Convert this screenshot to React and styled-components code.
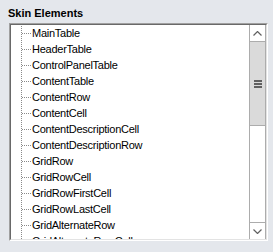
import React from 'react';
import styled, { createGlobalStyle } from 'styled-components';

const GlobalStyle = createGlobalStyle`
  html, body {
    margin: 0;
    padding: 0;
    background: #e4e7ec;
  }
  body {
    width: 273px;
    height: 252px;
    overflow: hidden;
    font-family: "Liberation Sans", Arial, sans-serif;
  }
`;

const Panel = styled.div`
  display: flex;
  flex-direction: column;
  padding: 7px 0 0 8px;
`;

const Title = styled.div`
  font-size: 11px;
  font-weight: bold;
  line-height: 13px;
  color: #000;
`;

const Box = styled.div`
  margin: 3px 0 0 1px;
  width: 259px;
  height: 218px;
  box-sizing: border-box;
  border: 1px solid;
  border-color: #a0a0a0 #ffffff #ffffff #a0a0a0;
  display: flex;
`;

const Inner = styled.div`
  flex: 1;
  display: flex;
  min-height: 0;
  border: 1px solid;
  border-color: #696969 #e3e3e3 #e3e3e3 #696969;
  background: #fff;
`;

const Tree = styled.div`
  flex: 1;
  overflow: hidden;
  background-image: linear-gradient(to bottom, #8a8a8a 50%, transparent 50%);
  background-size: 1px 2px;
  background-position: 10px 1px;
  background-repeat: repeat-y;
`;

const Row = styled.div`
  display: flex;
  align-items: center;
  height: 16px;
  flex: none;
  white-space: nowrap;
`;

const Connector = styled.span`
  width: 9px;
  height: 1px;
  margin-left: 11px;
  background-image: linear-gradient(to right, #8a8a8a 50%, transparent 50%);
  background-size: 2px 1px;
`;

const Label = styled.span`
  margin-left: 1px;
  font-size: 11px;
  letter-spacing: -0.25px;
  line-height: 16px;
  color: #000;
`;

const ScrollBar = styled.div`
  width: 17px;
  display: flex;
  flex-direction: column;
  box-sizing: border-box;
  border-left: 1px solid #acacac;
  border-right: 1px solid #acacac;
  background: #fff;
`;

const ArrowButton = styled.div`
  height: 17px;
  flex: none;
  display: flex;
  align-items: center;
  justify-content: center;
  box-sizing: border-box;
  background: #fff;
  border-top: ${(p) => (p.$down ? '1px solid #acacac' : 'none')};
  border-bottom: ${(p) => (p.$down ? 'none' : '1px solid #acacac')};
`;

const Thumb = styled.div`
  height: 84px;
  flex: none;
  box-sizing: border-box;
  background: #dadada;
  border-bottom: 1px solid #acacac;
  display: flex;
  align-items: center;
  justify-content: center;
`;

const Track = styled.div`
  flex: 1;
`;

const items = [
  'MainTable',
  'HeaderTable',
  'ControlPanelTable',
  'ContentTable',
  'ContentRow',
  'ContentCell',
  'ContentDescriptionCell',
  'ContentDescriptionRow',
  'GridRow',
  'GridRowCell',
  'GridRowFirstCell',
  'GridRowLastCell',
  'GridAlternateRow',
  'GridAlternateRowCell',
];

function Chevron({ down }) {
  return (
    <svg width="9" height="5" viewBox="0 0 9 5">
      <polyline
        points={down ? '0.5,0.5 4.5,4.5 8.5,0.5' : '0.5,4.5 4.5,0.5 8.5,4.5'}
        fill="none"
        stroke="#606060"
        strokeWidth="1.2"
      />
    </svg>
  );
}

function Grip() {
  return (
    <svg width="8" height="8" viewBox="0 0 8 8">
      <rect x="0" y="0" width="8" height="2" fill="#606060" />
      <rect x="0" y="3" width="8" height="2" fill="#606060" />
      <rect x="0" y="6" width="8" height="2" fill="#606060" />
    </svg>
  );
}

export default function App() {
  return (
    <>
      <GlobalStyle />
      <Panel>
        <Title>Skin Elements</Title>
        <Box>
          <Inner>
            <Tree>
              {items.map((name) => (
                <Row key={name}>
                  <Connector />
                  <Label>{name}</Label>
                </Row>
              ))}
            </Tree>
            <ScrollBar>
              <ArrowButton>
                <Chevron />
              </ArrowButton>
              <Thumb>
                <Grip />
              </Thumb>
              <Track />
              <ArrowButton $down>
                <Chevron down />
              </ArrowButton>
            </ScrollBar>
          </Inner>
        </Box>
      </Panel>
    </>
  );
}
